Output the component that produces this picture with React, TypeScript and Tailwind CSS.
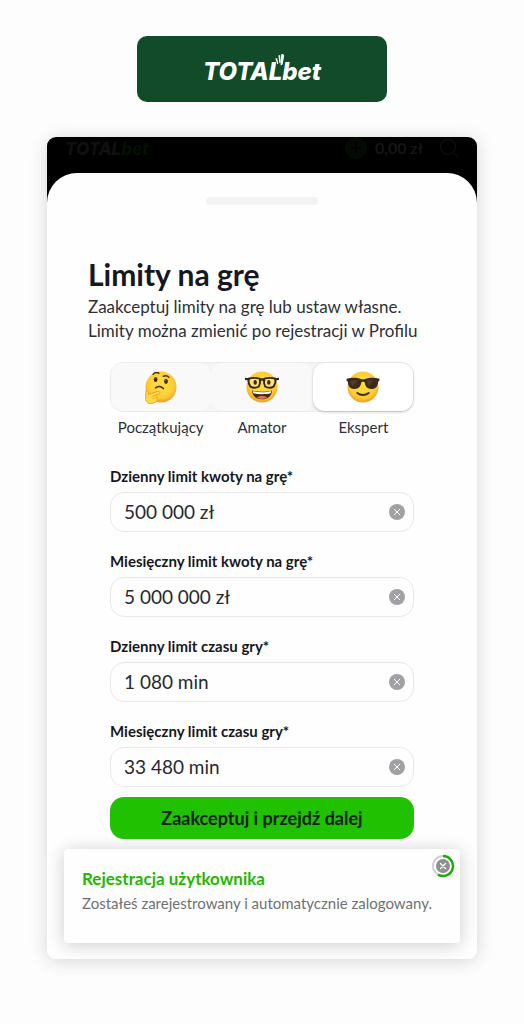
import { useState } from "react";

const FACE = "#fcc934";

function FaceBase({ id }: { id: string }) {
  return (
    <>
      <defs>
        <radialGradient id={id} cx="50%" cy="42%" r="55%">
          <stop offset="0.4" stopColor="#fed93c" />
          <stop offset="0.8" stopColor={FACE} />
          <stop offset="1" stopColor="#f0a52a" />
        </radialGradient>
      </defs>
      <circle cx="18" cy="18" r="16.4" fill={`url(#${id})`} />
    </>
  );
}

function ThinkingFace() {
  return (
    <svg viewBox="0 0 36 36" className="size-[34px]" aria-hidden="true">
      <FaceBase id="face-thinking" />
      <ellipse cx="12.3" cy="10" rx="2" ry="2.7" fill="#422b0d" />
      <ellipse cx="23.3" cy="12" rx="2" ry="2.7" fill="#422b0d" />
      <circle cx="11.8" cy="9" r="0.6" fill="#8a6a45" />
      <circle cx="22.8" cy="11" r="0.6" fill="#8a6a45" />
      <path d="M9.6 4.4c1.8-1.9 4-2.2 6.2-1" fill="none" stroke="#422b0d" strokeWidth="1.5" strokeLinecap="round" />
      <path d="M20.4 6.6c2.2-1 4.4-.6 6 1.2" fill="none" stroke="#422b0d" strokeWidth="1.5" strokeLinecap="round" />
      <path d="M12.2 18.8c2.6-1.8 6-1.7 8.4.9" fill="none" stroke="#422b0d" strokeWidth="1.6" strokeLinecap="round" />
      <path
        d="M2 22c1.500-.8 2.600.3 2.700 1.800l.2 2 9.600-3.200c2.200-.7 3.200 1.600 1.300 2.600l-3.600 1.800c1.400.3 2 1.200 1.500 2.200 1 .6.8 1.700 0 2.500.2 1.200-.5 2-1.700 2.600l-2.800 1c-4 1-7.500-1-7.500-5.500z"
        fill="#ffd84a"
        stroke="#e99a1d"
        strokeWidth="0.9"
        strokeLinejoin="round"
      />
      <path d="M8.500 28l4-1M9.500 30.300l4-1" stroke="#e99a1d" strokeWidth="0.8" strokeLinecap="round" />
    </svg>
  );
}

function NerdFace() {
  return (
    <svg viewBox="0 0 36 36" className="size-[34px]" aria-hidden="true">
      <FaceBase id="face-nerd" />
      <path d="M7.4 21.600c5.600 1.900 15.600 1.900 21.200 0-.2 5.800-4.600 9.400-10.600 9.400s-10.400-3.600-10.600-9.400z" fill="#422b0d" />
      <path d="M8.200 22.200c5.600 1.700 14 1.700 19.600 0 0 1-.3 1.900-.7 2.500-5.200 1.300-13 1.300-18.200 0-.4-.6-.7-1.500-.7-2.500z" fill="#fff" />
      <path d="M12.400 29.200c1.600-2.200 9.600-2.200 11.200 0-3 2-8.200 2-11.200 0z" fill="#ed6b64" />
      <path d="M3.600 9.200c3.600-1 8.400-1 12 0 .6 3 .2 6-1 8.200-2.600 1.600-6.400 1.600-8.800.2-1.700-2.300-2.400-5.400-2.200-8.400z" fill="#fde07a" stroke="#33261a" strokeWidth="2" strokeLinejoin="round" />
      <path d="M32.400 9.200c-3.600-1-8.400-1-12 0-.6 3-.2 6 1 8.200 2.600 1.600 6.400 1.600 8.800.2 1.700-2.300 2.400-5.400 2.200-8.400z" fill="#fde07a" stroke="#33261a" strokeWidth="2" strokeLinejoin="round" />
      <path d="M.8 9.400l3.200.6M35.200 9.400l-3.200.6M15.800 11c1.200-1.100 3.200-1.100 4.400 0" fill="none" stroke="#33261a" strokeWidth="2.200" strokeLinecap="round" />
      <ellipse cx="10.800" cy="13.200" rx="1.800" ry="2.500" fill="#422b0d" />
      <ellipse cx="25.200" cy="13.200" rx="1.800" ry="2.500" fill="#422b0d" />
    </svg>
  );
}

function SunglassesFace() {
  return (
    <svg viewBox="0 0 36 36" className="size-[34px]" aria-hidden="true">
      <FaceBase id="face-cool" />
      <path
        d="M.6 9.200c5.400-1.300 11-1.200 15.200.4 1.400.5 3 .5 4.400 0 4.200-1.600 9.800-1.700 15.200-.4v2.300l-1.400.9c-.3 4.900-2.300 7.400-6.400 7.600-4.600.3-7-2-7.700-6.500-.3-1.500-3.500-1.500-3.800 0-.7 4.500-3.100 6.800-7.700 6.500-4.100-.2-6.100-2.700-6.400-7.600l-1.400-.9z"
        fill="#3b2a1a"
      />
      <path d="M5 11.500c2.500-.8 5.500-.8 7.500-.2l-5.200 6.200c-1.600-1-2.300-3.200-2.300-6zM22.500 11.500c2.200-.8 4.500-.8 6.500-.5l-4.600 6.200c-1.300-1.200-2-3.200-1.900-5.700z" fill="#6f5a42" fillOpacity="0.4" />
      <path d="M12 24.300c3.400 2.800 8.600 2.800 12 0" fill="none" stroke="#422b0d" strokeWidth="2" strokeLinecap="round" />
    </svg>
  );
}

function Cross({ className }: { className: string }) {
  return (
    <svg viewBox="0 0 16 16" className={className} aria-hidden="true">
      <circle cx="8" cy="8" r="8" fill="#a0a1a4" />
      <path d="M5.200 5.200l5.600 5.600M10.800 5.200l-5.600 5.600" stroke="#fff" strokeWidth="1" strokeLinecap="round" />
    </svg>
  );
}

const levels = [
  { name: "Początkujący", Face: ThinkingFace, edge: "rounded-l-[14px] border-l" },
  { name: "Amator", Face: NerdFace, edge: "" },
  { name: "Ekspert", Face: SunglassesFace, edge: "rounded-r-[14px] border-r" },
];

const limits = [
  { id: "daily-amount", label: "Dzienny limit kwoty na grę*", value: "500 000 zł" },
  { id: "monthly-amount", label: "Miesięczny limit kwoty na grę*", value: "5 000 000 zł" },
  { id: "daily-time", label: "Dzienny limit czasu gry*", value: "1 080 min" },
  { id: "monthly-time", label: "Miesięczny limit czasu gry*", value: "33 480 min" },
];

function LimitField({ id, label, initial }: { id: string; label: string; initial: string }) {
  const [value, setValue] = useState(initial);
  return (
    <div className="flex flex-col gap-[6px]">
      <label htmlFor={id} className="text-[15px] leading-5 font-bold text-[#15181e]">
        {label}
      </label>
      <div className="flex h-10 items-center rounded-[14px] border border-[#e8e8ea] bg-[#fefefe] pr-2 pl-[13px]">
        <input
          id={id}
          value={value}
          onChange={(e) => setValue(e.target.value)}
          className="w-full min-w-0 flex-1 bg-transparent text-[19px] leading-6 text-[#262930] outline-none"
        />
        <button type="button" aria-label="Wyczyść" onClick={() => setValue("")}>
          <Cross className="size-4" />
        </button>
      </div>
    </div>
  );
}

export default function App() {
  const [level, setLevel] = useState("Ekspert");
  return (
    <div className="min-h-screen bg-[#fdfdfd] px-[47px] pt-9 pb-16 font-['Lato','Open_Sans',sans-serif]">
      <header className="mx-auto flex h-[66px] w-[250px] items-center justify-center rounded-[10px] bg-[#114b29] text-white">
        <div className="relative pt-[6px] font-['Inter',sans-serif] text-[24px] leading-8 font-extrabold italic">
          TOTALbet
          <svg viewBox="0 0 14 14" className="absolute top-1 right-8 h-[14px] w-[14px]" fill="#fff" aria-hidden="true">
            <path d="M.3 4.500l1.800-.3 1.300 5.600-.9.500zM3.400 1.600l1.700-.5.600 7.400-1.300.7zM6.200.4c1.500-.8 3 .2 2.900 1.700l-1.500 8.500-2 1z" />
          </svg>
        </div>
      </header>

      <main className="mt-[35px] overflow-hidden rounded-[9px] bg-[linear-gradient(#000_70px,#fefefe_70px)] shadow-[0_2px_18px_rgba(0,0,0,0.16)]">
        <div className="flex h-9 items-start justify-between pr-[18px] pl-[18px]" aria-hidden="true">
          <span className="font-['Inter',sans-serif] text-[17px] leading-6 font-extrabold text-[#0e1110] italic">
            TOTAL<span className="text-[#031003]">bet</span>
          </span>
          <div className="flex items-center gap-2 text-[16px] leading-5 font-bold text-[#141617]">
            <svg viewBox="0 0 22 22" className="size-[22px]">
              <circle cx="11" cy="11" r="11" fill="#020b02" />
              <path d="M11 6v10M6 11h10" stroke="#000" strokeWidth="2" />
            </svg>
            0,00 zł
            <svg viewBox="0 0 20 20" className="ml-2 size-5" fill="none" stroke="#0b0c0d" strokeWidth="1.500">
              <circle cx="9" cy="9" r="7.500" />
              <path d="M14.500 14.500l4.500 4.500" />
            </svg>
          </div>
        </div>

        <section className="rounded-t-[30px] bg-[#fefefe] pb-4">
          <div className="flex justify-center pt-6">
            <div className="h-2 w-28 rounded-full bg-[#f3f3f3]" />
          </div>

          <div className="px-[41px] pt-[51px] text-[#15181e]">
            <h1 className="text-[30px] leading-9 font-bold">Limity na grę</h1>
            <p className="mt-[3px] text-[17px] leading-6 text-[#2d3037]">
              Zaakceptuj limity na grę lub ustaw własne.
              <br />
              Limity można zmienić po rejestracji w Profilu
            </p>
          </div>

          <form className="px-[63px]" onSubmit={(e) => e.preventDefault()}>
            <fieldset className="mt-[19px] grid grid-cols-3" aria-label="Poziom gracza">
              {levels.map(({ name, Face, edge }) => (
                <label key={name} className="relative flex cursor-pointer flex-col text-center text-[15px] leading-5 text-[#2d3037]">
                  <input
                    type="radio"
                    name="level"
                    className="sr-only"
                    checked={level === name}
                    onChange={() => setLevel(name)}
                  />
                  <span className={`flex h-[50px] border-y border-[#ebebec] bg-[#f4f4f4] ${edge}`}>
                    <span
                      className={`flex flex-1 items-center justify-center rounded-[12px] ${
                        level === name ? "bg-white shadow-[0_1px_3px_rgba(0,0,0,0.22)]" : "bg-[#f9f9f9]"
                      }`}
                    >
                      <Face />
                    </span>
                  </span>
                  <span className="mt-[5px]">{name}</span>
                </label>
              ))}
            </fieldset>

            <div className="mt-[29px] flex flex-col gap-[19px]">
              {limits.map((l) => (
                <LimitField key={l.id} id={l.id} label={l.label} initial={l.value} />
              ))}
            </div>

            <button
              type="submit"
              className="mt-[10px] h-[42px] w-full rounded-[14px] bg-[#1fc100] text-[18px] leading-6 font-bold text-[#15241a]"
            >
              Zaakceptuj i przejdź dalej
            </button>
          </form>

          <div
            role="status"
            className="mx-[17px] mt-[10px] flex h-[94px] justify-between rounded-[4px] bg-[#fefefe] pt-[5px] pr-[5px] pl-[18px] shadow-[0_2px_18px_rgba(0,0,0,0.2)]"
          >
            <div className="pt-[13px] whitespace-nowrap">
              <h2 className="text-[17px] leading-6 font-bold text-[#1fb800]">Rejestracja użytkownika</h2>
              <p className="text-[15px] leading-6 text-[#6f7175]">Zostałeś zarejestrowany i automatycznie zalogowany.</p>
            </div>
            <button type="button" aria-label="Zamknij" className="-ml-4 size-6 shrink-0">
              <svg viewBox="0 0 24 24" className="size-6" fill="none">
                <circle cx="12" cy="12" r="10" stroke="#cfd1d3" strokeWidth="2" />
                <path d="M12 2a10 10 0 1 1-5 18.660" stroke="#18ad0a" strokeWidth="2.400" />
                <circle cx="12" cy="12" r="7" fill="#8f9092" />
                <path d="M9.500 9.500l5 5M14.500 9.500l-5 5" stroke="#fff" strokeWidth="1.300" strokeLinecap="round" />
              </svg>
            </button>
          </div>
        </section>
      </main>
    </div>
  );
}
